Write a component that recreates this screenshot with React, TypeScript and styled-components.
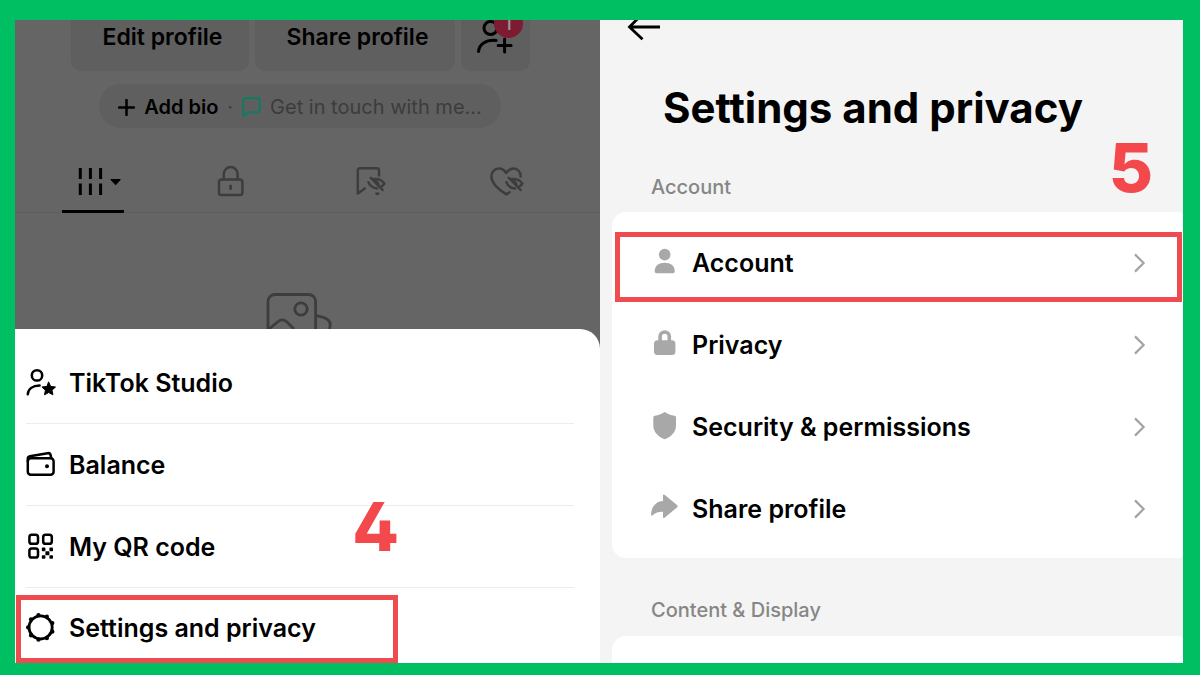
import React from "react";
import styled, { createGlobalStyle } from "styled-components";

const GlobalStyle = createGlobalStyle`
  *, *::before, *::after { box-sizing: border-box; }
  body {
    margin: 0;
    background: #00bf63;
    font-family: Inter, "Liberation Sans", sans-serif;
    color: #000;
  }
  button {
    font: inherit;
    color: inherit;
    border: 0;
    background: none;
    padding: 0;
    cursor: pointer;
  }
  svg { display: block; flex: none; }
`;

const Frame = styled.main`
  display: grid;
  grid-template-columns: 585fr 583fr;
  min-height: 100vh;
  padding: 20px 17px 12px 15px;
  background: #00bf63;
`;

/* ---------- left phone: profile with the open menu ---------- */

const ProfilePanel = styled.section`
  position: relative;
  display: flex;
  flex-direction: column;
  overflow: hidden;
  background: #656565;
`;

const ProfileArea = styled.div`
  display: flex;
  flex-direction: column;
  align-items: center;
`;

const ProfileActions = styled.div`
  display: grid;
  grid-template-columns: 178px 200px 69px;
  gap: 6px;
  margin-right: 15px;
`;

const ProfileButton = styled.button`
  position: relative;
  display: flex;
  justify-content: center;
  height: 51px;
  border-radius: 0 0 10px 10px;
  background: #5f5f5f;
  font-size: 23px;
  line-height: 34px;
  font-weight: 600;
  white-space: nowrap;
`;

const ProfileTextButton = styled(ProfileButton)`
  padding-left: 6px;
`;

const Badge = styled.span`
  position: absolute;
  top: -11px;
  right: 7px;
  width: 29px;
  height: 29px;
  border-radius: 50%;
  background: #7f1a33;
  color: #959595;
  font-size: 19px;
  line-height: 29px;
  font-weight: 500;
  text-align: center;
`;

const BioPill = styled.button`
  display: flex;
  align-items: center;
  gap: 9px;
  height: 44px;
  margin: 13px 15px 0 0;
  padding: 2px 19px 0;
  border-radius: 22px;
  background: #5f5f5f;
  font-size: 20px;
  line-height: 28px;
  white-space: nowrap;
`;

const BioStrong = styled.span`
  font-weight: 600;
`;

const BioHint = styled.span`
  color: #3c3c3c;
`;

const Tabs = styled.nav`
  display: grid;
  grid-template-columns: repeat(4, 1fr);
  justify-items: center;
  align-self: stretch;
  height: 85px;
  padding: 37px 24px 0 9px;
  border-bottom: 1px solid #5e5e5e;
`;

const Tab = styled.button<{ $active?: boolean }>`
  height: 48px;
  padding-bottom: 13px;
  border-bottom: 3px solid ${(p) => (p.$active ? "#000" : "transparent")};
  border-radius: 1px;
`;

const EmptyArt = styled.div`
  padding: 79px 17px 0 0;
`;

const Sheet = styled.div`
  flex: 1;
  padding: 13px 26px 0 11px;
  border-radius: 0 20px 0 0;
  background: #fff;
`;

const MenuList = styled.ul`
  margin: 0;
  padding: 0;
  list-style: none;
`;

const MenuItem = styled.li`
  position: relative;

  & + & {
    border-top: 1px solid #ececec;
  }
`;

const MenuButton = styled.button`
  display: flex;
  align-items: center;
  gap: 12px;
  width: 100%;
  height: 81px;
  font-size: 25px;
  line-height: 32px;
  font-weight: 560;
  text-align: left;
  white-space: nowrap;
`;

const LastMenuButton = styled(MenuButton)`
  height: 75px;
  align-items: flex-start;
  padding-top: 24px;
`;

/* ---------- red tutorial marks ---------- */

const MenuMark = styled.span`
  position: absolute;
  top: 7px;
  bottom: 0;
  left: -10px;
  width: 382px;
  border: 5px solid #ee4c50;
  pointer-events: none;
`;

const RowMark = styled.span`
  position: absolute;
  inset: 10px 1px 2px 3px;
  border: 5px solid #ee4c50;
  pointer-events: none;
`;

const StepNumber = styled.strong<{ $top: number; $right: number }>`
  position: absolute;
  top: ${(p) => p.$top}px;
  right: ${(p) => p.$right}px;
  color: #f4494c;
  font-size: 68px;
  line-height: 68px;
  font-weight: 800;
  font-feature-settings: "cv02" 1;
`;

/* ---------- right phone: settings ---------- */

const SettingsPanel = styled.section`
  position: relative;
  overflow: hidden;
  background: #f4f4f4;
`;

const BackButton = styled.button`
  display: block;
  height: 22px;
  margin-left: 27px;
`;

const Title = styled.h1`
  margin: 36px 0 0 63px;
  font-size: 42px;
  line-height: 60px;
  font-weight: 700;
  white-space: nowrap;
`;

const SectionLabel = styled.h2`
  margin: 0 0 0 51px;
  font-size: 20px;
  line-height: 28px;
  font-weight: 500;
  color: #868686;
`;

const FirstLabel = styled(SectionLabel)`
  padding-top: 35px;
`;

const NextLabel = styled(SectionLabel)`
  padding-top: 38px;
`;

const Card = styled.ul`
  margin: 11px 0 0 12px;
  padding: 10px 0 8px;
  list-style: none;
  border-radius: 14px 4px 4px 14px;
  background: #fff;
`;

const NextCard = styled(Card)`
  height: 27px;
  margin-top: 12px;
  border-radius: 14px 4px 0 0;
`;

const CardItem = styled.li`
  position: relative;
`;

const CardRow = styled.button`
  display: flex;
  align-items: center;
  gap: 13px;
  width: 100%;
  height: 82px;
  padding: 0 37px 0 39px;
  font-size: 25px;
  line-height: 32px;
  font-weight: 560;
  text-align: left;
  white-space: nowrap;
`;

const RowText = styled.span`
  flex: 1;
`;

/* ---------- icons ---------- */

const line = {
  fill: "none",
  stroke: "currentColor",
  strokeWidth: 2.5,
  strokeLinecap: "round" as const,
  strokeLinejoin: "round" as const,
};

const StudioIcon = () => (
  <svg width="31" height="30" viewBox="0 0 31 30" {...line}>
    <circle cx="11" cy="7.4" r="5.2" />
    <path d="M1.8 26.2C2.1 21 6.6 17.6 13.6 17.5" />
    <path
      d="M22.7 14.2l2 4.2 4.8.6-3.5 3.2.9 4.6-4.2-2.3-4.2 2.3.9-4.6-3.5-3.2 4.8-.6z"
      fill="currentColor"
      strokeWidth="1"
    />
  </svg>
);

const WalletIcon = () => (
  <svg width="31" height="30" viewBox="0 0 31 30" {...line}>
    <rect x="1.8" y="8.2" width="25.8" height="16.6" rx="3" />
    <path d="M1.8 11V8.6C1.8 7.3 2.6 6.4 3.9 6.2L21.6 3.2c1.6-.3 2.7.5 3 1.9L25.2 8" />
    <circle cx="21" cy="16.2" r="2" fill="currentColor" stroke="none" />
  </svg>
);

const QrIcon = () => (
  <svg width="31" height="30" viewBox="0 0 31 30" {...line}>
    <rect x="3.4" y="2.8" width="8.6" height="9" rx="2.4" />
    <rect x="17.2" y="2.8" width="8.6" height="9" rx="2.4" />
    <rect x="3.4" y="16.6" width="8.6" height="9" rx="2.4" />
    <g fill="currentColor" stroke="none">
      <rect x="15.8" y="15.6" width="3.6" height="3.6" rx=".8" />
      <rect x="23.4" y="15.6" width="3.6" height="3.6" rx=".8" />
      <rect x="19.4" y="19.2" width="4" height="4" rx=".5" />
      <rect x="15.8" y="23.2" width="3.6" height="3.6" rx=".8" />
      <rect x="23.4" y="23.2" width="3.6" height="3.6" rx=".8" />
    </g>
  </svg>
);

const gearTeeth = Array.from({ length: 9 }, (_, i) => {
  const a = Math.PI + (i * 2 * Math.PI) / 9;
  return { x: 14.6 + 12.5 * Math.cos(a), y: 15.4 + 12.5 * Math.sin(a) };
});

const GearIcon = () => (
  <svg width="31" height="30" viewBox="0 0 31 30" {...line}>
    <circle cx="14.6" cy="15.4" r="11.6" strokeWidth="2.8" />
    {gearTeeth.map((t) => (
      <circle key={t.x + t.y} cx={t.x} cy={t.y} r="2.1" fill="currentColor" stroke="none" />
    ))}
  </svg>
);

const AddFriendIcon = () => (
  <svg width="40" height="38" viewBox="0 0 40 38" {...line} strokeWidth="3">
    <circle cx="15.6" cy="8" r="6.6" />
    <path d="M3.6 31.5C4 24.5 10.6 19.4 21.2 20.4" />
    <path d="M29.6 19v13M23.1 25.5h13" />
  </svg>
);

const PlusIcon = () => (
  <svg width="17" height="17" viewBox="0 0 17 17" {...line}>
    <path d="M8.5 1v15M1 8.5h15" />
  </svg>
);

const BubbleIcon = () => (
  <svg width="19" height="20" viewBox="0 0 19 20" fill="none" stroke="#127a62" strokeWidth="2.2" strokeLinejoin="round">
    <path d="M3.8 1.2h11.4a2.6 2.6 0 0 1 2.6 2.6v9a2.6 2.6 0 0 1-2.6 2.6H6.4L1.2 18.8V3.8a2.6 2.6 0 0 1 2.6-2.6z" />
  </svg>
);

const GridIcon = () => (
  <svg width="62" height="32" viewBox="0 0 62 32" fill="none" stroke="currentColor" strokeWidth="3">
    <path d="M18.3 3v11M28.4 3v11M38.6 3v11M18.3 18.6v11.4M28.4 18.6v11.4M38.6 18.6v11.4" />
    <path d="M49.2 14.6h8.8l-4.4 4.6z" fill="currentColor" strokeWidth="1.4" strokeLinejoin="round" />
  </svg>
);

const LockTabIcon = () => (
  <svg width="34" height="32" viewBox="0 0 34 32" {...line} color="#3d3d3d">
    <rect x="5" y="14.4" width="23.4" height="15.6" rx="2.6" />
    <path d="M9.8 14.2V9a6.9 6.9 0 0 1 13.8 0v5.2" />
    <path d="M16.6 19.8v5" strokeLinecap="butt" strokeWidth="2.8" />
  </svg>
);

const HiddenEye = () => (
  <>
    <path d="M22 14c4.2-.4 8 1.2 10.4 4.6-.8 1.2-1.6 2-2.8 2.8" />
    <path d="M16.4 17.2c1.2 3.4 4.4 5.8 8.6 6.4" />
    <path d="M18.8 12.8L30.6 25" />
    <path d="M23.4 15.6l2.8 3.6" strokeWidth="3" />
  </>
);

const BookmarkTabIcon = () => (
  <svg width="34" height="32" viewBox="0 0 34 32" {...line} color="#3d3d3d">
    <path d="M27 10.6V5.4A2.2 2.2 0 0 0 24.8 3.2H8A2.2 2.2 0 0 0 5.8 5.4V28.6L12.8 23.4" />
    <path d="M24.4 28.6l1 .5.9-.5" />
    <HiddenEye />
  </svg>
);

const HeartTabIcon = () => (
  <svg width="34" height="32" viewBox="0 0 34 32" {...line} color="#3d3d3d">
    <path d="M30.6 11.4C30.8 6.8 27.6 3.6 23.6 3.6c-3 0-5.6 1.6-7.4 4.4C14.4 5.2 11.8 3.6 8.8 3.6 4.6 3.6 1.4 6.8 1.4 11.4c0 7 6.6 12.6 15 18l3.2-2.2" />
    <HiddenEye />
  </svg>
);

const GalleryArt = () => (
  <svg width="66" height="37" viewBox="0 0 66 37" fill="none" stroke="#3d3d3d" strokeWidth="2.8">
    <path d="M2 37V9.5a7 7 0 0 1 7-7h33.6a7 7 0 0 1 7 7v28" />
    <circle cx="35" cy="17" r="6.2" />
    <path d="M3 37L11.5 30Q16.5 25.8 21 30L28 37" />
    <path d="M50 23.6l6.4 1.5q9 2.4 7.6 9.4l-.6 2.5" />
  </svg>
);

const BackArrow = () => (
  <svg width="34" height="22" viewBox="0 0 34 22" fill="none" stroke="#000" strokeWidth="2.8">
    <path d="M2.5 7H33M15 -5.8L2.5 7l13 12.3" />
  </svg>
);

const Chevron = () => (
  <svg width="13" height="20" viewBox="0 0 13 20" fill="none" stroke="#a3a3a3" strokeWidth="2.2">
    <path d="M2 1.4L10.6 10L2 18.6" />
  </svg>
);

const grey = "#a8a8a8";

const PersonIcon = () => (
  <svg width="28" height="30" viewBox="0 0 28 30" fill={grey}>
    <circle cx="13.7" cy="6.6" r="5.8" />
    <path d="M3.7 23.2C3.7 17.5 8 14.7 13.7 14.7S23.7 17.5 23.7 23.2Q23.7 25.2 22 25.2H5.4Q3.7 25.2 3.7 23.2Z" />
  </svg>
);

const LockIcon = () => (
  <svg width="28" height="30" viewBox="0 0 28 30" fill={grey}>
    <rect x="3" y="10.3" width="21.4" height="14.8" rx="3.5" />
    <path d="M9.1 12V6.6a4.6 4.6 0 0 1 9.2 0V12" fill="none" stroke={grey} strokeWidth="3.6" />
  </svg>
);

const ShieldIcon = () => (
  <svg width="28" height="30" viewBox="0 0 28 30" fill={grey}>
    <path d="M13.7 0C16.5 2 20 3.2 23.5 3.8Q25 4 25 5.4V13.5C25 20 20.5 24.5 13.7 27.3C7 24.5 2.3 20 2.3 13.5V5.4Q2.3 4 3.8 3.8C7.4 3.2 10.8 2 13.7 0Z" />
  </svg>
);

const ShareIcon = () => (
  <svg width="28" height="30" viewBox="0 0 28 30" fill={grey}>
    <path d="M12 1.5Q12 0 13.5 .8L26 11Q27.3 12.3 26 13.5L13.5 23.8Q12 24.6 12 23V17.8C7 17.6 4 19 1.3 21.5Q0 22 0 20.5C.5 12.5 5 7.5 12 7Z" />
  </svg>
);

/* ---------- content ---------- */

const menuItems = [
  { label: "TikTok Studio", Icon: StudioIcon },
  { label: "Balance", Icon: WalletIcon },
  { label: "My QR code", Icon: QrIcon },
];

const accountRows = [
  { label: "Account", Icon: PersonIcon, marked: true },
  { label: "Privacy", Icon: LockIcon, marked: false },
  { label: "Security & permissions", Icon: ShieldIcon, marked: false },
  { label: "Share profile", Icon: ShareIcon, marked: false },
];

export default function App() {
  return (
    <>
      <GlobalStyle />
      <Frame>
        <ProfilePanel>
          <ProfileArea>
            <ProfileActions>
              <ProfileTextButton>Edit profile</ProfileTextButton>
              <ProfileTextButton>Share profile</ProfileTextButton>
              <ProfileButton aria-label="Add friends">
                <AddFriendIcon />
                <Badge>1</Badge>
              </ProfileButton>
            </ProfileActions>
            <BioPill>
              <PlusIcon />
              <BioStrong>Add bio</BioStrong>
              <BioHint>·</BioHint>
              <BubbleIcon />
              <BioHint>Get in touch with me...</BioHint>
            </BioPill>
            <Tabs>
              <Tab $active aria-label="Posts">
                <GridIcon />
              </Tab>
              <Tab aria-label="Private">
                <LockTabIcon />
              </Tab>
              <Tab aria-label="Saved">
                <BookmarkTabIcon />
              </Tab>
              <Tab aria-label="Liked">
                <HeartTabIcon />
              </Tab>
            </Tabs>
            <EmptyArt>
              <GalleryArt />
            </EmptyArt>
          </ProfileArea>
          <Sheet>
            <MenuList>
              {menuItems.map(({ label, Icon }) => (
                <MenuItem key={label}>
                  <MenuButton>
                    <Icon />
                    {label}
                  </MenuButton>
                </MenuItem>
              ))}
              <MenuItem>
                <LastMenuButton>
                  <GearIcon />
                  Settings and privacy
                </LastMenuButton>
                <MenuMark />
              </MenuItem>
            </MenuList>
          </Sheet>
          <StepNumber $top={472} $right={201}>4</StepNumber>
        </ProfilePanel>

        <SettingsPanel>
          <BackButton aria-label="Back">
            <BackArrow />
          </BackButton>
          <Title>Settings and privacy</Title>
          <FirstLabel>Account</FirstLabel>
          <Card>
            {accountRows.map(({ label, Icon, marked }) => (
              <CardItem key={label}>
                <CardRow>
                  <Icon />
                  <RowText>{label}</RowText>
                  <Chevron />
                </CardRow>
                {marked && <RowMark />}
              </CardItem>
            ))}
          </Card>
          <NextLabel>Content &amp; Display</NextLabel>
          <NextCard />
          <StepNumber $top={113} $right={30}>5</StepNumber>
        </SettingsPanel>
      </Frame>
    </>
  );
}
